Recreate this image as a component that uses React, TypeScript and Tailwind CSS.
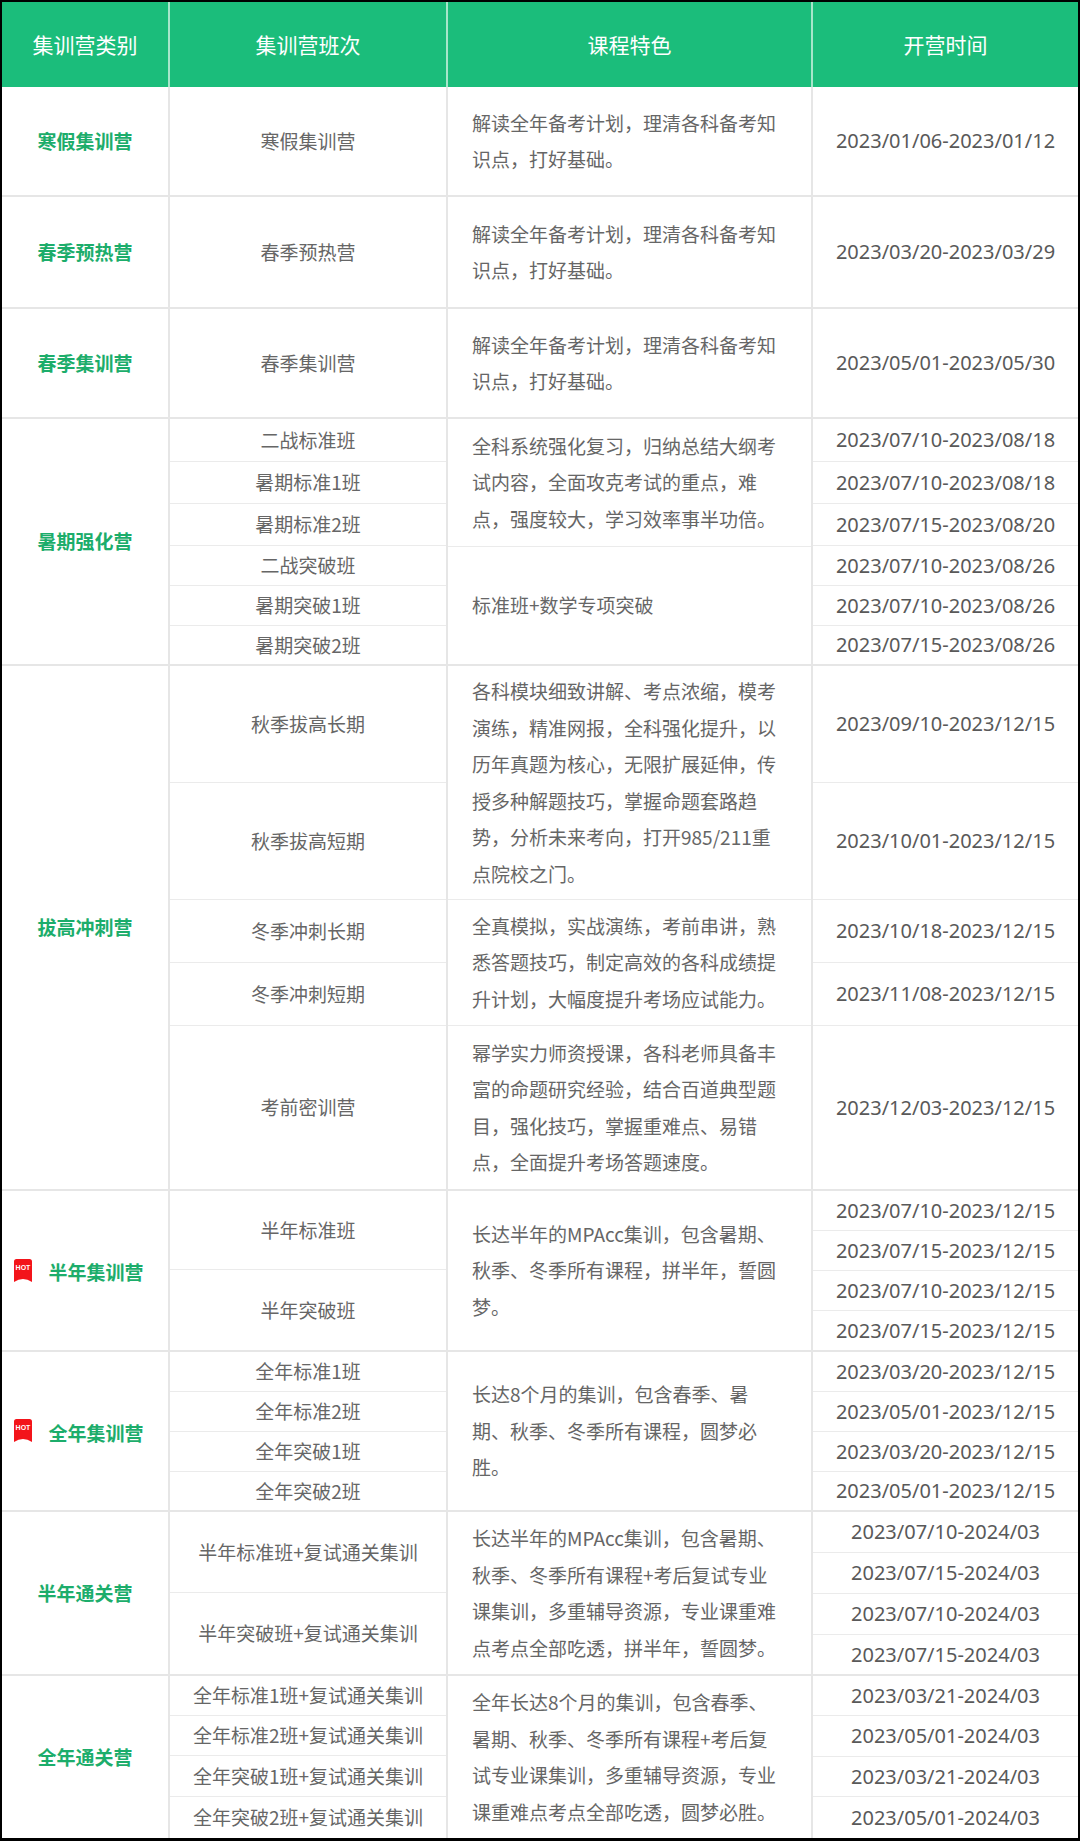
import React from "react";

type Cell = { text: string; h: string };
type Block = { lines: string[]; h: string };
type Group = {
  name: string;
  hot?: boolean;
  h: string;
  last?: boolean;
  classes: Cell[];
  features: Block[];
  dates: Cell[];
};

const basic = ["解读全年备考计划，理清各科备考知", "识点，打好基础。"];

const groups: Group[] = [
  {
    name: "寒假集训营",
    h: "h-[110px]",
    classes: [{ text: "寒假集训营", h: "" }],
    features: [{ lines: basic, h: "" }],
    dates: [{ text: "2023/01/06-2023/01/12", h: "" }],
  },
  {
    name: "春季预热营",
    h: "h-[112px]",
    classes: [{ text: "春季预热营", h: "" }],
    features: [{ lines: basic, h: "" }],
    dates: [{ text: "2023/03/20-2023/03/29", h: "" }],
  },
  {
    name: "春季集训营",
    h: "h-[110px]",
    classes: [{ text: "春季集训营", h: "" }],
    features: [{ lines: basic, h: "" }],
    dates: [{ text: "2023/05/01-2023/05/30", h: "" }],
  },
  {
    name: "暑期强化营",
    h: "h-[247px]",
    classes: [
      { text: "二战标准班", h: "h-[43px]" },
      { text: "暑期标准1班", h: "h-[42px]" },
      { text: "暑期标准2班", h: "h-[42px]" },
      { text: "二战突破班", h: "h-[40px]" },
      { text: "暑期突破1班", h: "h-[40px]" },
      { text: "暑期突破2班", h: "" },
    ],
    features: [
      {
        lines: [
          "全科系统强化复习，归纳总结大纲考",
          "试内容，全面攻克考试的重点，难",
          "点，强度较大，学习效率事半功倍。",
        ],
        h: "h-[128px]",
      },
      { lines: ["标准班+数学专项突破"], h: "" },
    ],
    dates: [
      { text: "2023/07/10-2023/08/18", h: "h-[43px]" },
      { text: "2023/07/10-2023/08/18", h: "h-[42px]" },
      { text: "2023/07/15-2023/08/20", h: "h-[42px]" },
      { text: "2023/07/10-2023/08/26", h: "h-[40px]" },
      { text: "2023/07/10-2023/08/26", h: "h-[40px]" },
      { text: "2023/07/15-2023/08/26", h: "" },
    ],
  },
  {
    name: "拔高冲刺营",
    h: "h-[525px]",
    classes: [
      { text: "秋季拔高长期", h: "h-[117px]" },
      { text: "秋季拔高短期", h: "h-[117px]" },
      { text: "冬季冲刺长期", h: "h-[63px]" },
      { text: "冬季冲刺短期", h: "h-[63px]" },
      { text: "考前密训营", h: "" },
    ],
    features: [
      {
        lines: [
          "各科模块细致讲解、考点浓缩，模考",
          "演练，精准网报，全科强化提升，以",
          "历年真题为核心，无限扩展延伸，传",
          "授多种解题技巧，掌握命题套路趋",
          "势，分析未来考向，打开985/211重",
          "点院校之门。",
        ],
        h: "h-[234px]",
      },
      {
        lines: [
          "全真模拟，实战演练，考前串讲，熟",
          "悉答题技巧，制定高效的各科成绩提",
          "升计划，大幅度提升考场应试能力。",
        ],
        h: "h-[126px]",
      },
      {
        lines: [
          "幂学实力师资授课，各科老师具备丰",
          "富的命题研究经验，结合百道典型题",
          "目，强化技巧，掌握重难点、易错",
          "点，全面提升考场答题速度。",
        ],
        h: "",
      },
    ],
    dates: [
      { text: "2023/09/10-2023/12/15", h: "h-[117px]" },
      { text: "2023/10/01-2023/12/15", h: "h-[117px]" },
      { text: "2023/10/18-2023/12/15", h: "h-[63px]" },
      { text: "2023/11/08-2023/12/15", h: "h-[63px]" },
      { text: "2023/12/03-2023/12/15", h: "" },
    ],
  },
  {
    name: "半年集训营",
    hot: true,
    h: "h-[161px]",
    classes: [
      { text: "半年标准班", h: "h-[79px]" },
      { text: "半年突破班", h: "" },
    ],
    features: [
      {
        lines: [
          "长达半年的MPAcc集训，包含暑期、",
          "秋季、冬季所有课程，拼半年，誓圆",
          "梦。",
        ],
        h: "",
      },
    ],
    dates: [
      { text: "2023/07/10-2023/12/15", h: "h-[40px]" },
      { text: "2023/07/15-2023/12/15", h: "h-[40px]" },
      { text: "2023/07/10-2023/12/15", h: "h-[40px]" },
      { text: "2023/07/15-2023/12/15", h: "" },
    ],
  },
  {
    name: "全年集训营",
    hot: true,
    h: "h-[160px]",
    classes: [
      { text: "全年标准1班", h: "h-[40px]" },
      { text: "全年标准2班", h: "h-[40px]" },
      { text: "全年突破1班", h: "h-[40px]" },
      { text: "全年突破2班", h: "" },
    ],
    features: [
      {
        lines: [
          "长达8个月的集训，包含春季、暑",
          "期、秋季、冬季所有课程，圆梦必",
          "胜。",
        ],
        h: "",
      },
    ],
    dates: [
      { text: "2023/03/20-2023/12/15", h: "h-[40px]" },
      { text: "2023/05/01-2023/12/15", h: "h-[40px]" },
      { text: "2023/03/20-2023/12/15", h: "h-[40px]" },
      { text: "2023/05/01-2023/12/15", h: "" },
    ],
  },
  {
    name: "半年通关营",
    h: "h-[164px]",
    classes: [
      { text: "半年标准班+复试通关集训", h: "h-[81px]" },
      { text: "半年突破班+复试通关集训", h: "" },
    ],
    features: [
      {
        lines: [
          "长达半年的MPAcc集训，包含暑期、",
          "秋季、冬季所有课程+考后复试专业",
          "课集训，多重辅导资源，专业课重难",
          "点考点全部吃透，拼半年，誓圆梦。",
        ],
        h: "",
      },
    ],
    dates: [
      { text: "2023/07/10-2024/03", h: "h-[41px]" },
      { text: "2023/07/15-2024/03", h: "h-[41px]" },
      { text: "2023/07/10-2024/03", h: "h-[41px]" },
      { text: "2023/07/15-2024/03", h: "" },
    ],
  },
  {
    name: "全年通关营",
    h: "h-[162px]",
    last: true,
    classes: [
      { text: "全年标准1班+复试通关集训", h: "h-[40px]" },
      { text: "全年标准2班+复试通关集训", h: "h-[40px]" },
      { text: "全年突破1班+复试通关集训", h: "h-[41px]" },
      { text: "全年突破2班+复试通关集训", h: "" },
    ],
    features: [
      {
        lines: [
          "全年长达8个月的集训，包含春季、",
          "暑期、秋季、冬季所有课程+考后复",
          "试专业课集训，多重辅导资源，专业",
          "课重难点考点全部吃透，圆梦必胜。",
        ],
        h: "",
      },
    ],
    dates: [
      { text: "2023/03/21-2024/03", h: "h-[40px]" },
      { text: "2023/05/01-2024/03", h: "h-[41px]" },
      { text: "2023/03/21-2024/03", h: "h-[40px]" },
      { text: "2023/05/01-2024/03", h: "" },
    ],
  },
];

// 小红标 "HOT"
function HotIcon() {
  return (
    <svg width="18" height="24" viewBox="0 0 18 24" className="shrink-0">
      <path d="M2.5 0 H15.5 Q18 0 18 2.5 V23 Q9 17 0 23 V2.5 Q0 0 2.5 0 Z" fill="#f3141a" />
      <text
        x="9"
        y="10.5"
        textAnchor="middle"
        fontSize="7"
        fontWeight="700"
        fill="#ffffff"
        fontFamily="Liberation Sans, sans-serif"
      >
        HOT
      </text>
    </svg>
  );
}

const cjk = "font-['Noto_Sans_CJK_SC',sans-serif]";

export default function App() {
  return (
    <div className="w-[1080px] h-[1841px] bg-black pt-[2px] pl-[2px] pr-[2px] pb-[3px]">
      <div className={`h-full bg-white flex flex-col ${cjk}`}>
        {/* 表头 */}
        <div className="h-[85px] shrink-0 grid grid-cols-[168px_278px_365px_265px] bg-[#1bbd7b] text-white text-[21px]">
          <div className="flex items-center justify-center border-r-2 border-[#a6e6ca]">集训营类别</div>
          <div className="flex items-center justify-center border-r-2 border-[#a6e6ca]">集训营班次</div>
          <div className="flex items-center justify-center border-r-2 border-[#a6e6ca]">课程特色</div>
          <div className="flex items-center justify-center">开营时间</div>
        </div>

        {groups.map((g) => (
          <div
            key={g.name}
            className={`${g.h} shrink-0 grid grid-cols-[168px_278px_365px_265px] ${
              g.last ? "" : "border-b-2 border-[#e6e6e6]"
            }`}
          >
            {/* 类别 */}
            <div
              className={`flex items-center justify-center border-r-2 border-[#e6e6e6] text-[19px] font-bold text-[#1cad6b] ${
                g.hot ? "gap-[16px] pr-[12px]" : ""
              }`}
            >
              {g.hot && <HotIcon />}
              <span className={g.hot ? "pt-[4px]" : ""}>{g.name}</span>
            </div>

            {/* 班次 */}
            <div className="flex flex-col border-r-2 border-[#e6e6e6]">
              {g.classes.map((c, i) => {
                const isLast = i === g.classes.length - 1;
                return (
                  <div
                    key={i}
                    className={`${isLast ? "flex-1" : `${c.h} border-b border-[#ebebeb]`} flex items-center justify-center text-[19px] text-[#666666]`}
                  >
                    {c.text}
                  </div>
                );
              })}
            </div>

            {/* 课程特色 */}
            <div className="flex flex-col border-r-2 border-[#e6e6e6]">
              {g.features.map((f, i) => {
                const isLast = i === g.features.length - 1;
                return (
                  <div
                    key={i}
                    className={`${isLast ? "flex-1" : `${f.h} border-b border-[#ebebeb]`} flex flex-col justify-center pl-[24px] text-[19px] leading-[36.5px] text-[#666666] whitespace-nowrap`}
                  >
                    {f.lines.map((l, j) => (
                      <div key={j}>{l}</div>
                    ))}
                  </div>
                );
              })}
            </div>

            {/* 开营时间 */}
            <div className="flex flex-col">
              {g.dates.map((d, i) => {
                const isLast = i === g.dates.length - 1;
                return (
                  <div
                    key={i}
                    className={`${isLast ? "flex-1" : `${d.h} border-b border-[#ebebeb]`} flex items-center justify-center font-['Noto_Sans','Noto_Sans_CJK_SC',sans-serif] text-[20px] text-[#595959]`}
                  >
                    {d.text}
                  </div>
                );
              })}
            </div>
          </div>
        ))}
      </div>
    </div>
  );
}
